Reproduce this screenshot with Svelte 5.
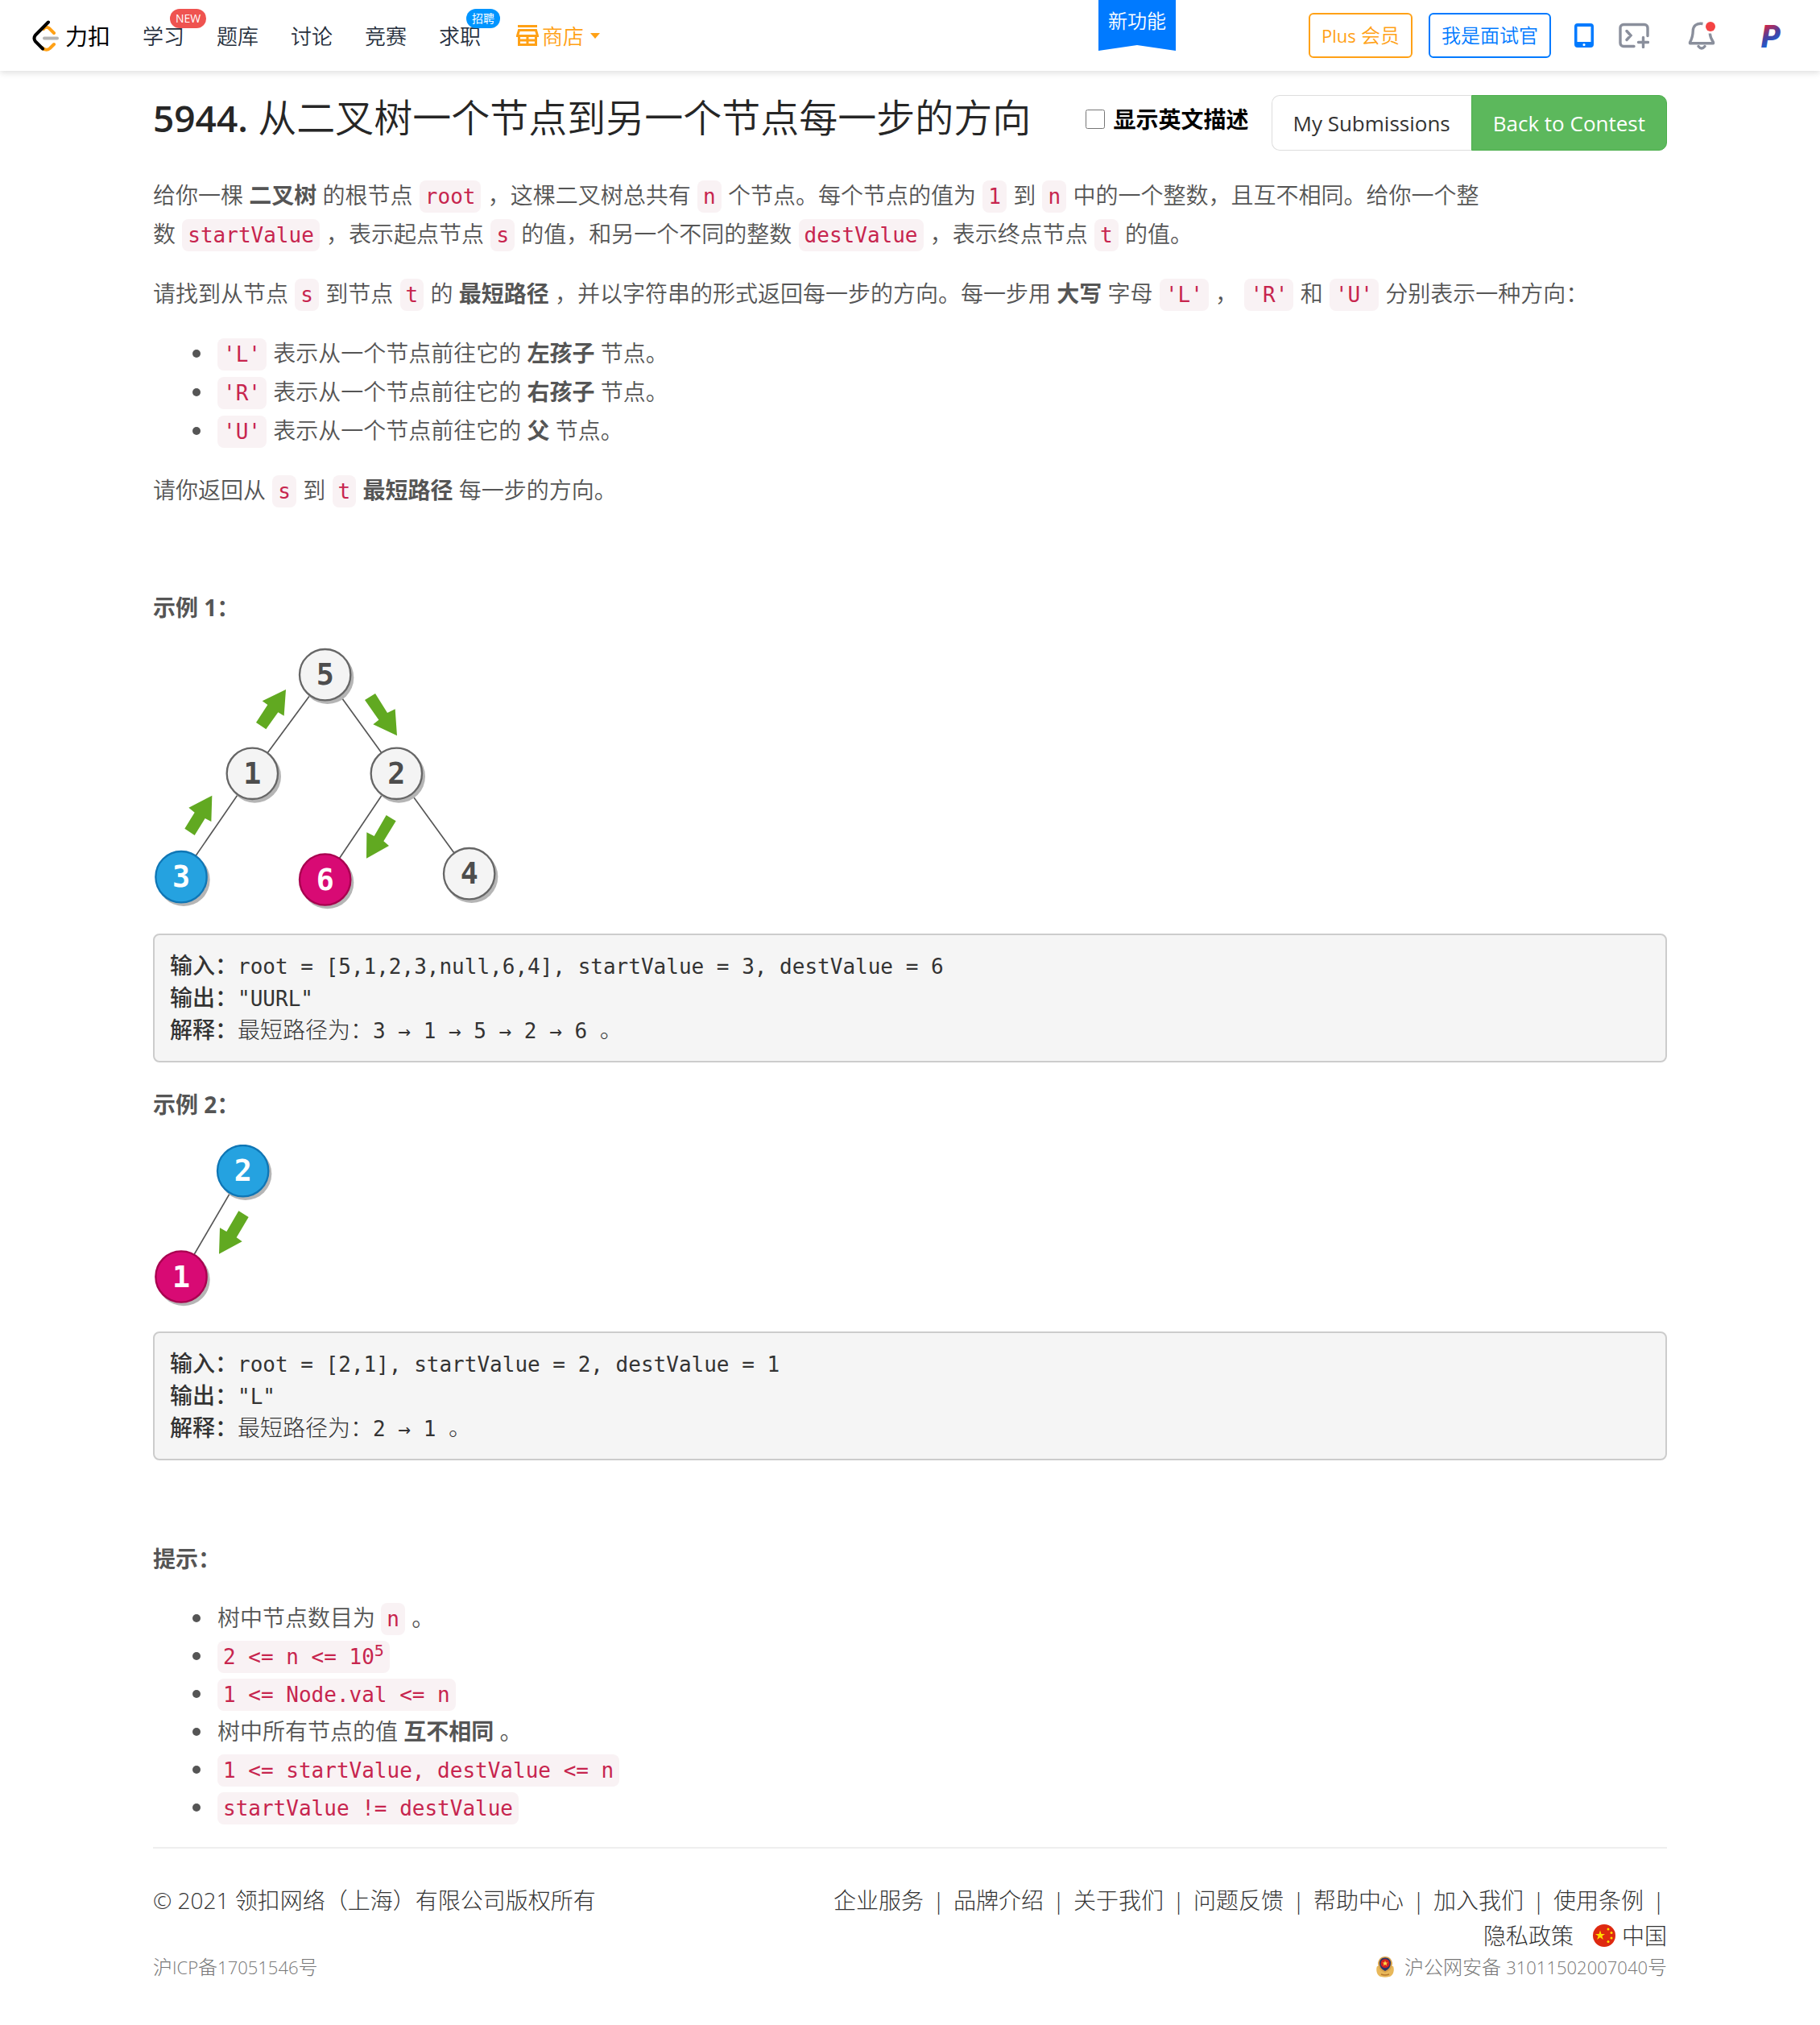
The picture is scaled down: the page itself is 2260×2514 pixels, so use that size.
<script>
  const menu = [
    { label: '学习', badge: 'NEW', tone: 'red' },
    { label: '题库' },
    { label: '讨论' },
    { label: '竞赛' },
    { label: '求职', badge: '招聘', tone: 'blue' }
  ];

  const directions = [
    { code: "'L'", target: '左孩子' },
    { code: "'R'", target: '右孩子' },
    { code: "'U'", target: '父' }
  ];

  const treeOne = {
    width: 430,
    height: 329,
    viewBox: '60 72 1290 987',
    edges: [
      [701, 173, 430, 541],
      [701, 173, 967, 541],
      [430, 541, 165, 926],
      [967, 541, 701, 936],
      [967, 541, 1238, 914]
    ],
    nodes: [
      { x: 701, y: 173, value: 5, tone: 'plain' },
      { x: 430, y: 541, value: 1, tone: 'plain' },
      { x: 967, y: 541, value: 2, tone: 'plain' },
      { x: 165, y: 926, value: 3, tone: 'start' },
      { x: 701, y: 936, value: 6, tone: 'end' },
      { x: 1238, y: 914, value: 4, tone: 'plain' }
    ],
    arrows: [
      '555,228 548,326 526,313 481,376 444,351 487,285 467,271',
      '280,623 277,720 254,708 215,771 178,746 215,686 193,668',
      '969,400 880,358 901,341 849,267 888,243 933,315 962,301',
      '855,857 856,760 884,774 929,696 965,718 919,793 939,810'
    ]
  };

  const treeTwo = {
    width: 150,
    height: 206,
    viewBox: '60 0 450 618',
    edges: [[395, 98, 165, 492]],
    nodes: [
      { x: 395, y: 98, value: 2, tone: 'start' },
      { x: 165, y: 492, value: 1, tone: 'end' }
    ],
    arrows: ['306,407 309,310 334,324 379,247 416,270 371,346 392,361']
  };

  const links = ['企业服务', '品牌介绍', '关于我们', '问题反馈', '帮助中心', '加入我们', '使用条例'];

  let english = $state(false);
</script>

{#snippet tree(t, label)}
  <svg class="tree" width={t.width} height={t.height} viewBox={t.viewBox} role="img" aria-label={label}>
    {#each t.edges as [x1, y1, x2, y2]}
      <line {x1} {y1} {x2} {y2} />
    {/each}
    {#each t.nodes as n}
      <g class={n.tone}>
        <circle class="shade" cx={n.x + 9} cy={n.y + 11} r="98" />
        <circle class="disc" cx={n.x} cy={n.y} r="95" />
        <text x={n.x} y={n.y + 38}>{n.value}</text>
      </g>
    {/each}
    {#each t.arrows as points}
      <polygon {points} />
    {/each}
  </svg>
{/snippet}

<div class="page" lang="zh-CN">
  <header class="bar">
    <a class="brand" href="#home">
      <svg width="36" height="40" viewBox="39 24 36 40" fill="none" stroke-linecap="round" stroke-width="4">
        <path d="M54 36q3-4 7-1l6 6M52 59q5 5 10 1l5-5" stroke="#ffa116" />
        <path d="M55 47.500h16" stroke="#b3b3b3" />
        <path d="M60 27.500 44 43.500q-3 4 0 8l9 9" stroke="#000" />
      </svg>
      <span>力扣</span>
    </a>
    <nav class="menu">
      {#each menu as m}
        <a href="#{m.label}">{m.label}{#if m.badge}<span class="badge {m.tone}">{m.badge}</span>{/if}</a>
      {/each}
      <a class="store" href="#store">
        <svg width="28" height="28" viewBox="0 0 28 28" fill="none" stroke="#ffa116" stroke-width="3">
          <path d="M2 2.500h24M3.500 7.500h21l2 7h-25zM3.500 14.500v11h21v-11M14 14.500v11M3 20h22" />
        </svg>
        <span>商店</span>
        <svg width="12" height="7" viewBox="0 0 12 7"><path d="M0 0h12L6 7z" fill="#ffa116" /></svg>
      </a>
    </nav>
    <a class="ribbon" href="#new">新功能</a>
    <div class="tools">
      <a class="pill plus" href="#plus"><span class="latin">Plus</span> 会员</a>
      <a class="pill hire" href="#hire">我是面试官</a>
      <button class="phone" aria-label="手机版">
        <svg width="24" height="32" viewBox="0 0 24 32">
          <path fill="#007aff" fill-rule="evenodd" d="M4 1h16a4 4 0 0 1 4 4v22a4 4 0 0 1-4 4H4a4 4 0 0 1-4-4V5a4 4 0 0 1 4-4zM3.500 5v19h17V5zM12 26a1.500 1.500 0 1 0 0 3.200 1.500 1.500 0 0 0 0-3.200z" />
        </svg>
      </button>
      <button class="terminal" aria-label="终端">
        <svg width="38" height="32" viewBox="0 0 38 32" fill="none" stroke="#8a8f9c" stroke-width="3.400" stroke-linecap="round">
          <path d="M19 29.500H6a4 4 0 0 1-4-4v-19a4 4 0 0 1 4-4h26a4 4 0 0 1 4 4v10M10 10.500l5 5.500-5 5.500M24.500 24.500h12M30.500 18.500v12" />
        </svg>
      </button>
      <button class="bell" aria-label="通知">
        <svg width="34" height="38" viewBox="0 0 34 38" fill="none" stroke="#8a8f9c" stroke-width="3.400" stroke-linejoin="round">
          <path d="M18.500 4.500C10 3 6.500 8 6.300 13c-.2 7-.8 9.500-3.800 14.500v1.300h29v-1.300C28.500 23 27.600 21 27.300 16.500" />
          <path d="M13 32.500q4 5 8 0" stroke-linecap="round" />
          <circle cx="28" cy="8" r="6" fill="#f44343" stroke="none" />
        </svg>
      </button>
      <a class="avatar" href="#me" aria-label="个人主页">
        <svg width="32" height="56" viewBox="0 0 32 56">
          <defs>
            <linearGradient id="ink" x1="0.3" y1="0" x2="0.6" y2="1">
              <stop offset="0.15" stop-color="#c8284f" />
              <stop offset="0.45" stop-color="#4a3f9f" />
              <stop offset="0.7" stop-color="#1f5fd0" />
              <stop offset="1" stop-color="#5a2a55" />
            </linearGradient>
          </defs>
          <text x="3" y="43" fill="url(#ink)">P</text>
        </svg>
      </a>
    </div>
  </header>

  <main>
    <div class="heading">
      <h1><span class="number">5944.</span> 从二叉树一个节点到另一个节点每一步的方向</h1>
      <label class="english"><input type="checkbox" bind:checked={english} /><span>显示英文描述</span></label>
      <div class="group">
        <a class="mine" href="#submissions">My Submissions</a>
        <a class="back" href="#contest">Back to Contest</a>
      </div>
    </div>

    <p>给你一棵 <strong>二叉树</strong> 的根节点&nbsp;<code>root</code>&nbsp;，这棵二叉树总共有&nbsp;<code>n</code>&nbsp;个节点。每个节点的值为&nbsp;<code>1</code>&nbsp;到&nbsp;<code>n</code>&nbsp;中的一个整数，且互不相同。给你一个整<span class="keep">数&nbsp;<code>startValue</code>&nbsp;，表示</span>起点节点&nbsp;<code>s</code>&nbsp;的值，和另一个不同的整数&nbsp;<code>destValue</code>&nbsp;，表示终点节点&nbsp;<code>t</code>&nbsp;的值。</p>
    <p>请找到从节点&nbsp;<code>s</code>&nbsp;到节点&nbsp;<code>t</code>&nbsp;的 <strong>最短路径</strong>&nbsp;，并以字符串的形式返回每一步的方向。每一步用 <strong>大写</strong> 字母&nbsp;<code>'L'</code>&nbsp;，&nbsp;<code>'R'</code>&nbsp;和&nbsp;<code>'U'</code>&nbsp;分别表示一种方向：</p>
    <ul>
      {#each directions as d}
        <li><code>{d.code}</code>&nbsp;表示从一个节点前往它的 <strong>{d.target}</strong> 节点。</li>
      {/each}
    </ul>
    <p>请你返回从&nbsp;<code>s</code>&nbsp;到&nbsp;<code>t</code>&nbsp;<strong>最短路径</strong> 每一步的方向。</p>

    <p class="first"><strong>示例 1：</strong></p>
    {@render tree(treeOne, '示例 1 的二叉树')}
    <pre><b>输入：</b><span>root = [5,1,2,3,null,6,4], startValue = 3, destValue = 6</span>
<b>输出：</b><span>"UURL"</span>
<b>解释：</b>最短路径为：<span>3 → 1 → 5 → 2 → 6 </span>。</pre>

    <p><strong>示例 2：</strong></p>
    {@render tree(treeTwo, '示例 2 的二叉树')}
    <pre><b>输入：</b><span>root = [2,1], startValue = 2, destValue = 1</span>
<b>输出：</b><span>"L"</span>
<b>解释：</b>最短路径为：<span>2 → 1 </span>。</pre>

    <p class="first"><strong>提示：</strong></p>
    <ul class="hints">
      <li>树中节点数目为&nbsp;<code>n</code>&nbsp;。</li>
      <li><code>2 &lt;= n &lt;= 10<sup>5</sup></code></li>
      <li><code>1 &lt;= Node.val &lt;= n</code></li>
      <li>树中所有节点的值 <strong>互不相同</strong>&nbsp;。</li>
      <li><code>1 &lt;= startValue, destValue &lt;= n</code></li>
      <li><code>startValue != destValue</code></li>
    </ul>

    <footer>
      <div class="legal">
        <span>© 2021 领扣网络（上海）有限公司版权所有</span>
        <a class="record" href="#icp">沪<small>ICP</small>备<small>17051546</small>号</a>
      </div>
      <div class="about">
        <div class="links">
          {#each links as l}
            <span><a href="#{l}">{l}</a><i>|</i></span>
          {/each}
          <a class="privacy" href="#privacy">隐私政策</a>
          <a class="region" href="#region">
            <svg width="28" height="30" viewBox="0 0 28 30">
              <circle cx="14" cy="15" r="14" fill="#de2910" />
              <g fill="#ffde00">
                <path d="M9 8.500l1.500 4.400h4.600l-3.700 2.700 1.400 4.400L9 17.300l-3.800 2.700 1.400-4.400-3.700-2.700h4.600z" />
                <circle cx="19" cy="7" r="1.500" /><circle cx="23" cy="11.500" r="1.500" />
                <circle cx="23" cy="18" r="1.500" /><circle cx="19" cy="22.500" r="1.500" />
              </g>
            </svg>
            <span>中国</span>
          </a>
        </div>
        <a class="record police" href="#police">
          <svg width="24" height="26" viewBox="0 0 24 26">
            <path d="M2 12C0 17 2 24 7 25q5 1.500 10 0c5-1 7-8 5-13z" fill="#e8b85a" />
            <path d="M12 0C6 0 4 4 3 8q0 9 9 12 9-3 9-12C20 4 18 0 12 0z" fill="#d8a24a" />
            <path d="M12 1.500C7 1.500 5 5 5 8q0 7 7 10 7-3 7-10c0-3-2-6.500-7-6.500z" fill="#27356b" />
            <circle cx="12" cy="8.500" r="5.500" fill="#d5211f" />
            <path d="M12 5l1 2.500h2.500l-2 1.500.8 2.500L12 10l-2.300 1.500.8-2.500-2-1.500H11z" fill="#ffd94a" />
            <path d="M7 22q5 2 10 0" stroke="#b9792c" stroke-width="1.500" fill="none" />
          </svg>
          <span>沪公网安备 <small>31011502007040</small>号</span>
        </a>
      </div>
    </footer>
  </main>
</div>

<style>
  :global(body) {
    background: #fff;
  }
  .page {
    font-family: 'Open Sans', 'Noto Sans CJK SC', sans-serif;
    font-size: 28px;
    font-weight: 350;
    color: #555;
  }
  a {
    color: inherit;
    text-decoration: none;
  }
  button {
    display: flex;
    padding: 0;
    border: 0;
    background: none;
    cursor: pointer;
  }
  svg {
    display: block;
    flex: none;
  }

  .bar {
    display: flex;
    align-items: center;
    height: 88px;
    padding: 0 44px 0 39px;
    box-shadow: 0 2px 8px rgba(0, 0, 0, 0.14);
    color: #262f3d;
    font-size: 26px;
  }
  .brand {
    display: flex;
    align-items: center;
    gap: 6px;
    color: #000;
    font-size: 28px;
    font-weight: 400;
  }
  .menu {
    display: flex;
    align-items: center;
    gap: 40px;
    margin-left: 40px;
  }
  .menu a {
    position: relative;
  }
  .badge {
    position: absolute;
    left: 34px;
    top: -14px;
    height: 24px;
    padding: 0 7px;
    border-radius: 12px;
    color: #fff;
    font-size: 14px;
    font-weight: 400;
    line-height: 24px;
    white-space: nowrap;
  }
  .red {
    background: #ef5350;
  }
  .blue {
    background: #0095ff;
  }
  .store {
    display: flex;
    align-items: center;
    gap: 4px;
    margin-left: 4px;
    color: #ffa116;
  }
  .store span {
    margin-right: 4px;
  }
  .ribbon {
    align-self: flex-start;
    box-sizing: border-box;
    height: 63px;
    margin-left: auto;
    padding: 8px 12px 0;
    background: #007aff;
    color: #fff;
    font-size: 24px;
    line-height: 36px;
    clip-path: polygon(0 0, 100% 0, 100% 100%, 50% 56px, 0 100%);
  }
  .tools {
    display: flex;
    align-items: center;
    margin-left: 165px;
  }
  .pill {
    padding: 0 14px;
    border: 2px solid;
    border-radius: 6px;
    font-size: 24px;
    line-height: 52px;
    white-space: nowrap;
  }
  .latin {
    font-size: 22px;
    font-weight: 400;
  }
  .plus {
    margin-right: 20px;
    border-color: #ffa116;
    color: #ffa116;
  }
  .hire {
    border-color: #007aff;
    color: #007aff;
  }
  .phone {
    margin-left: 29px;
  }
  .terminal {
    margin-left: 31px;
  }
  .bell {
    margin-left: 48px;
  }
  .avatar {
    margin-left: 54px;
  }
  .avatar text {
    font: italic 900 38px Roboto, sans-serif;
  }

  main {
    max-width: 1880px;
    margin: 0 auto;
    padding: 30px 20px 40px;
  }
  .heading {
    display: flex;
    align-items: flex-start;
    margin-bottom: 31px;
  }
  h1 {
    margin: 0;
    color: #262626;
    font-size: 48px;
    font-weight: 350;
    line-height: 56px;
  }
  .number {
    font-size: 46px;
    font-weight: 600;
  }
  .english {
    display: flex;
    align-items: center;
    gap: 10px;
    margin-left: auto;
    color: #000;
    font-weight: 700;
    line-height: 60px;
  }
  .english input {
    width: 24px;
    height: 24px;
    margin: 0;
  }
  .group {
    display: flex;
    margin-left: 28px;
    font-size: 26px;
    font-weight: 400;
    line-height: 63px;
  }
  .group a {
    padding: 3px 26px 1px;
    border: 1px solid #ddd;
    white-space: nowrap;
  }
  .group .mine {
    border-right: 0;
    border-radius: 10px 0 0 10px;
    color: #333;
  }
  .group .back {
    border-color: #4cae4c;
    border-radius: 0 10px 10px 0;
    background: #5cb85c;
    color: #fff;
  }

  p,
  ul {
    margin: 0 0 26px;
    line-height: 48px;
  }
  ul {
    padding-left: 76px;
  }
  li {
    padding-left: 4px;
  }
  .hints {
    line-height: 47px;
  }
  .first {
    margin-top: 98px;
  }
  .keep {
    white-space: nowrap;
  }
  code {
    margin: 0 1px;
    padding: 5px 7px;
    border-radius: 8px;
    background: #f9f2f4;
    color: #c7254e;
    font-family: 'DejaVu Sans Mono', monospace;
    font-size: 26px;
    line-height: 1;
  }
  li > code:first-child {
    margin-left: 0;
  }
  sup {
    font-size: 20px;
    line-height: 0;
  }

  .tree {
    margin-bottom: 26px;
  }
  .tree line {
    stroke: #555;
    stroke-width: 5;
  }
  .tree polygon {
    fill: #61a921;
  }
  .tree .shade {
    fill: #b5b5b5;
  }
  .tree .disc {
    fill: #f4f4f4;
    stroke: #666;
    stroke-width: 7;
  }
  .tree text {
    fill: #4d4d4d;
    font: 700 110px 'DejaVu Sans Mono', monospace;
    text-anchor: middle;
  }
  .tree .start .disc {
    fill: #25a2e0;
    stroke: #0f76b5;
  }
  .tree .end .disc {
    fill: #d80a74;
    stroke: #a8004f;
  }
  .tree .start text,
  .tree .end text {
    fill: #fff;
  }

  pre {
    margin: 0 0 28px;
    padding: 16px 19px 20px;
    border: 2px solid #ccc;
    border-radius: 8px;
    background: #f5f5f5;
    color: #333;
    font-family: 'Noto Sans CJK SC', sans-serif;
    font-size: 28px;
    font-weight: 300;
    line-height: 40px;
    white-space: pre-wrap;
  }
  pre b {
    font-weight: 500;
  }
  pre span {
    font-family: 'DejaVu Sans Mono', monospace;
    font-size: 26px;
    font-weight: 400;
    line-height: 1;
  }

  footer {
    display: flex;
    justify-content: space-between;
    padding-top: 42px;
    border-top: 2px solid #eee;
    color: #333;
    font-weight: 300;
    line-height: 44px;
  }
  .legal,
  .about {
    display: flex;
    flex-direction: column;
    justify-content: space-between;
  }
  .about {
    width: 56%;
    align-items: flex-end;
  }
  .links {
    display: flex;
    flex-wrap: wrap;
    justify-content: flex-end;
    column-gap: 8px;
  }
  .links i {
    display: inline-block;
    width: 15px;
    margin: 0 3px 0 11px;
    font-style: normal;
    text-align: center;
  }
  .privacy {
    margin-right: 16px;
  }
  .region,
  .police {
    display: flex;
    align-items: center;
    gap: 8px;
  }
  .police {
    gap: 12px;
  }
  .record {
    color: #777;
    font-size: 24px;
    line-height: 34px;
  }
  .record small {
    font-size: 22px;
  }
</style>
